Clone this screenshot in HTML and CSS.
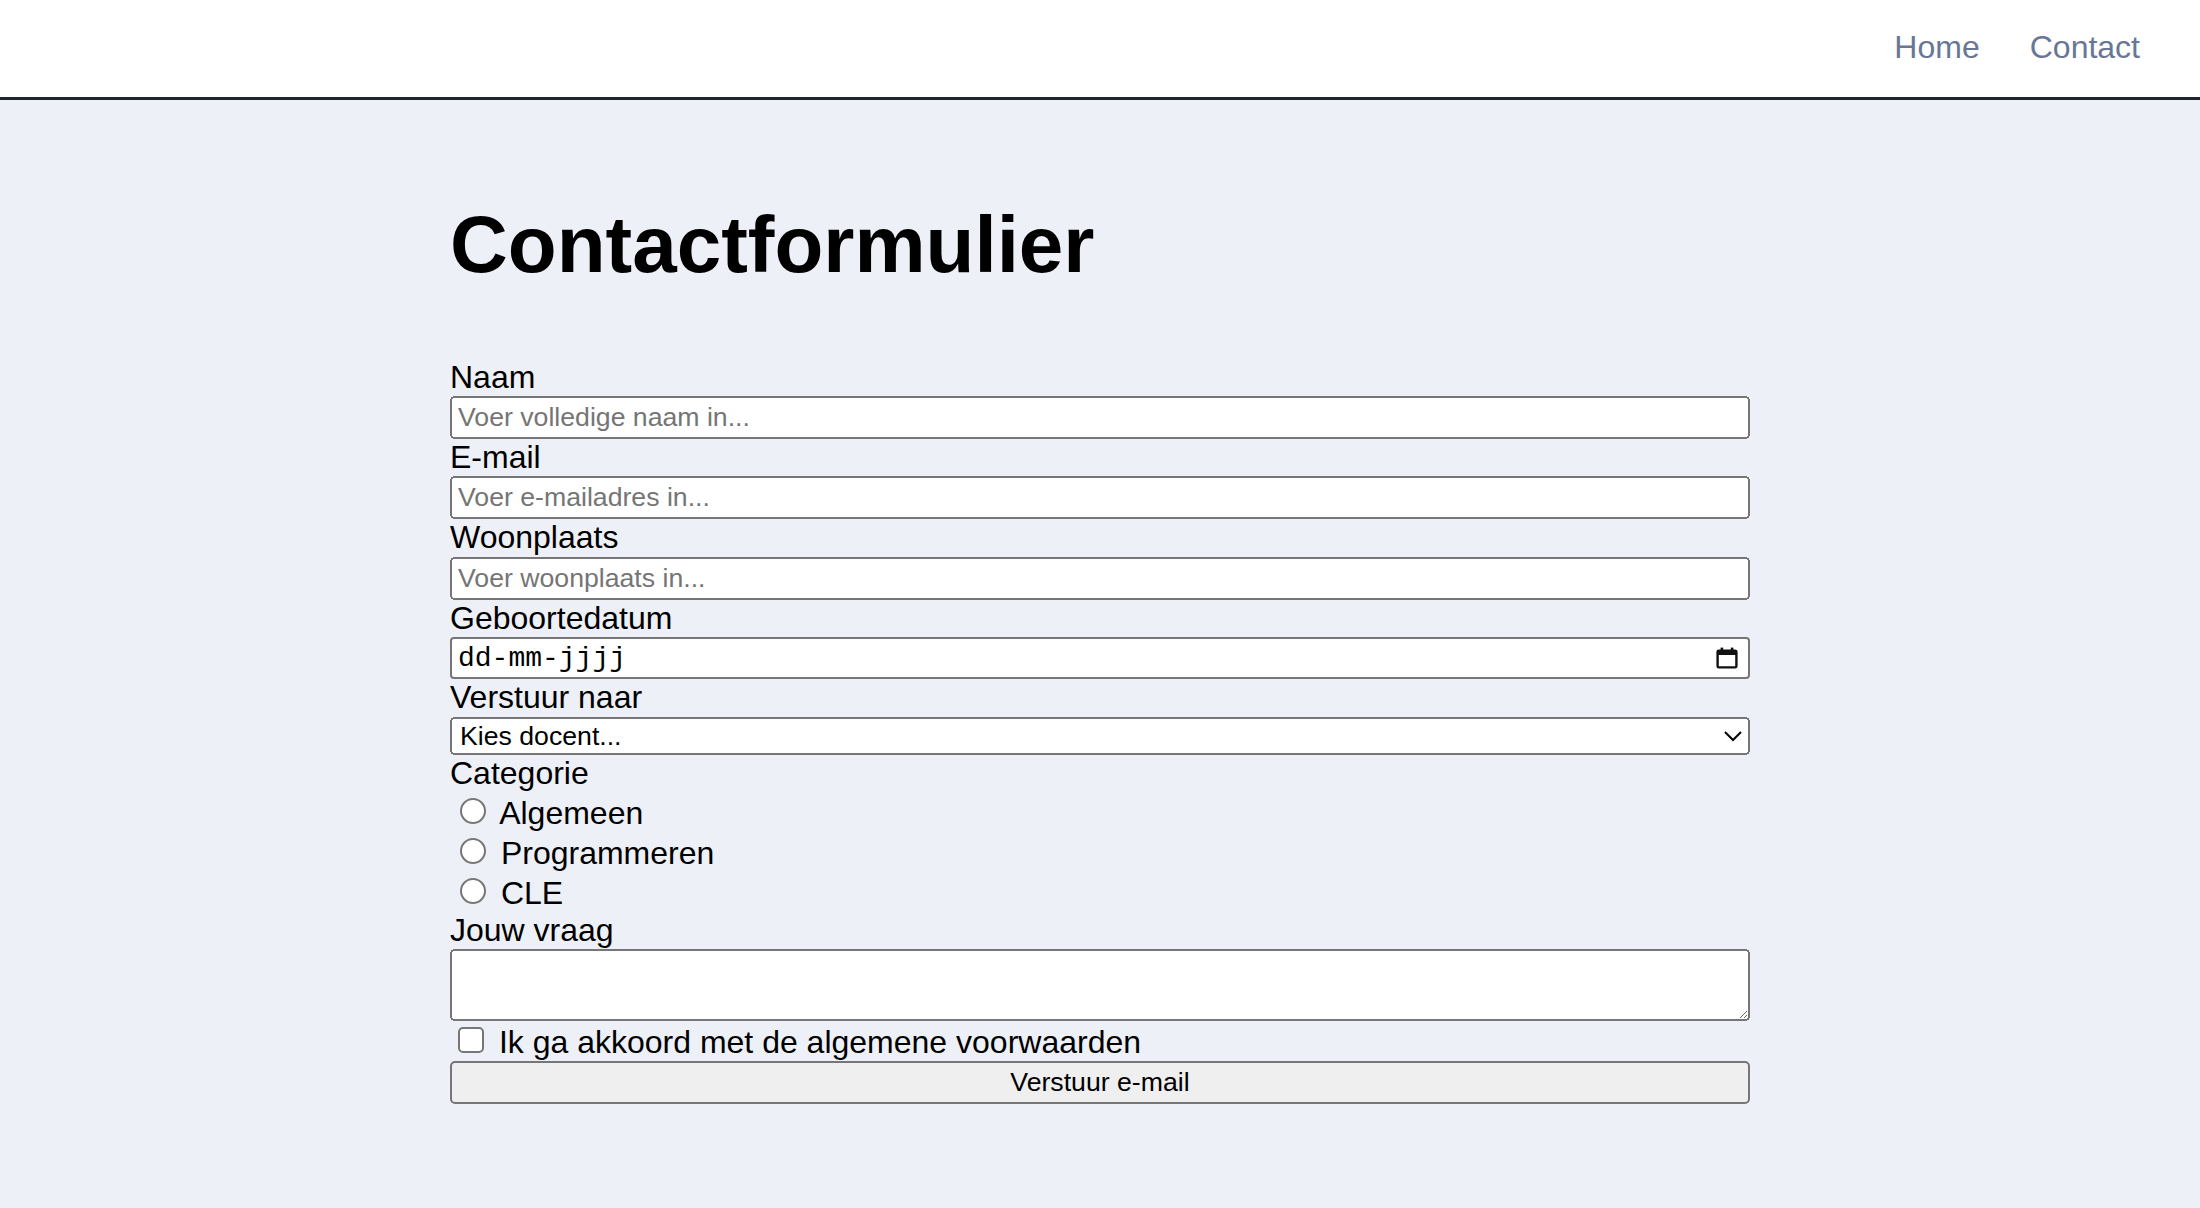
FILE: index.html
```html
<!DOCTYPE html>
<html lang="nl">
<head>
<meta charset="utf-8">
<title>Contactformulier</title>
<link rel="stylesheet" href="styles.css">
</head>
<body>
<header class="site-header">
  <nav class="nav">
    <a class="nav-link" href="#">Home</a>
    <a class="nav-link" href="#">Contact</a>
  </nav>
</header>
<main class="page">
  <h1 class="title">Contactformulier</h1>
  <form class="contact-form">
    <label class="field-label" for="naam">Naam</label>
    <input class="text-input" id="naam" type="text" placeholder="Voer volledige naam in...">
    <label class="field-label" for="email">E-mail</label>
    <input class="text-input" id="email" type="email" placeholder="Voer e-mailadres in...">
    <label class="field-label" for="woonplaats">Woonplaats</label>
    <input class="text-input" id="woonplaats" type="text" placeholder="Voer woonplaats in...">
    <label class="field-label">Geboortedatum</label>
    <div class="date-field">
      <span class="date-text">dd-mm-jjjj</span>
      <svg class="date-icon" width="11" height="11" viewBox="0 0 22 22" aria-hidden="true">
        <rect x="1.6" y="3.6" width="18.8" height="16.8" rx="1.2" fill="none" stroke="#111" stroke-width="2.4"/>
        <rect x="1.6" y="3.6" width="18.8" height="4.4" fill="#111"/>
        <rect x="4.6" y="0.6" width="2.6" height="3.6" fill="#111"/>
        <rect x="14.8" y="0.6" width="2.6" height="3.6" fill="#111"/>
      </svg>
    </div>
    <label class="field-label" for="docent">Verstuur naar</label>
    <select class="select-input" id="docent">
      <option>Kies docent...</option>
    </select>
    <span class="field-label">Categorie</span>
    <div class="choice-row"><input class="radio" type="radio" name="categorie" id="cat1"> <label for="cat1">Algemeen</label></div>
    <div class="choice-row"><input class="radio" type="radio" name="categorie" id="cat2"> <label for="cat2">Programmeren</label></div>
    <div class="choice-row"><input class="radio" type="radio" name="categorie" id="cat3"> <label for="cat3">CLE</label></div>
    <label class="field-label" for="vraag">Jouw vraag</label>
    <textarea class="textarea" id="vraag" rows="2"></textarea>
    <div class="choice-row"><input class="checkbox" type="checkbox" id="akkoord"> <label for="akkoord">Ik ga akkoord met de algemene voorwaarden</label></div>
    <button class="submit" type="submit">Verstuur e-mail</button>
  </form>
</main>
</body>
</html>
```

FILE: styles.css
```css
html {
  background: #edf0f7;
}

body {
  zoom: 2;
  margin: 0;
  font-family: "Liberation Sans", Arial, Helvetica, sans-serif;
  font-size: 16px;
  color: #000;
  background: #edf0f7;
}

.site-header {
  height: 48.5px;
  background: #ffffff;
  border-bottom: 1.5px solid #1f2435;
  display: flex;
  align-items: center;
  justify-content: flex-end;
  padding: 0 30px 0 0;
  box-sizing: content-box;
}

.nav {
  display: flex;
  gap: 25px;
  margin-bottom: 1px;
}

.nav-link {
  color: #687795;
  text-decoration: none;
  font-size: 16px;
}

.page {
  width: 650px;
  margin: 0 auto;
}

.title {
  font-size: 40px;
  font-weight: bold;
  margin: 49.5px 0 34px 0;
  line-height: normal;
}

.contact-form {
  display: flex;
  flex-direction: column;
}

.field-label {
  display: block;
  font-size: 16px;
  line-height: 18.6px;
}

.text-input {
  font-family: "Liberation Sans", Arial, sans-serif;
  font-size: 13.333px;
  width: 100%;
  box-sizing: border-box;
}

.date-field {
  box-sizing: border-box;
  height: 21.33px;
  background: #ffffff;
  border: 1px solid #767676;
  border-radius: 2px;
  display: flex;
  align-items: center;
  justify-content: space-between;
  padding: 0 5px 0 3px;
}

.date-text {
  font-family: "Liberation Mono", "DejaVu Sans Mono", monospace;
  font-size: 14px;
  color: #000;
}

.date-icon {
  display: block;
}

.select-input {
  font-family: "Liberation Sans", Arial, sans-serif;
  font-size: 13.333px;
  width: 100%;
  color: #000;
}

.choice-row {
  font-size: 16px;
}

.textarea {
  font-family: "Liberation Mono", monospace;
  font-size: 13.333px;
  width: 100%;
  box-sizing: border-box;
}

.submit {
  font-family: "Liberation Sans", Arial, sans-serif;
  font-size: 13.333px;
  width: 100%;
  color: #000;
}
```
